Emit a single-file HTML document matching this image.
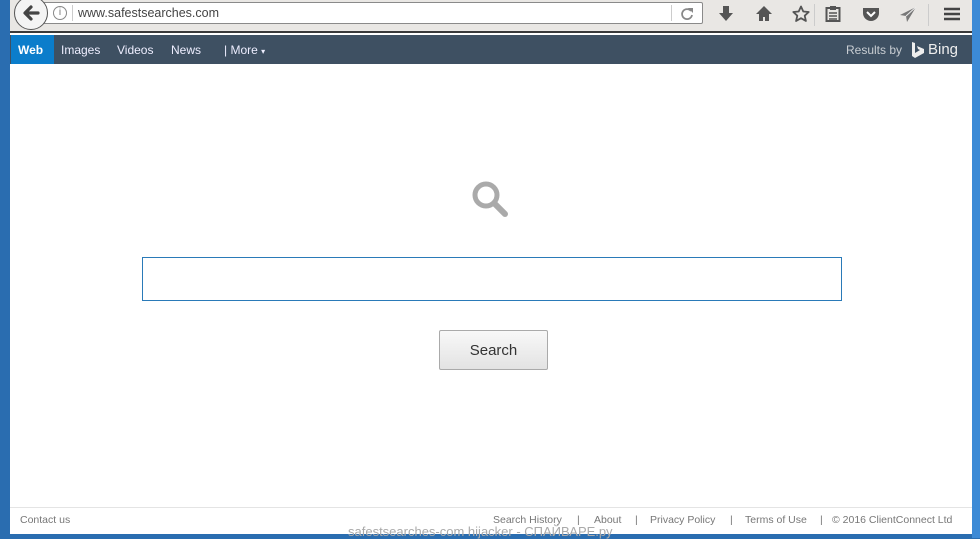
<!DOCTYPE html>
<html><head><meta charset="utf-8"><style>
*{margin:0;padding:0;box-sizing:border-box}
body{width:980px;height:538px;overflow:hidden;background:#2a6db0;font-family:"Liberation Sans",sans-serif;position:relative}
.win{position:absolute;left:10px;top:0;width:962px;height:534px;background:#fff}
.tb{position:absolute;left:0;top:0;width:962px;height:33px;background:#e9e7e4;border-bottom:2px solid #3a3a3a}
.url{position:absolute;left:32px;top:2px;width:661px;height:22px;background:#fff;border:1px solid #8a8a8a;border-radius:2px}
.back{position:absolute;left:4px;top:-4px;width:34px;height:34px;border-radius:50%;background:#f4f4f4;border:1px solid #555}
.nav{position:absolute;left:0;top:35px;width:962px;height:29px;background:#3e5062}
.nav span{position:absolute;top:8px;color:#eef;font-size:12px}
.foot{position:absolute;left:0;top:507px;width:962px;height:27px;border-top:1px solid #e4e4e4;font-size:10.5px;color:#777}
.foot span{position:absolute;top:6px}
.ic{position:absolute;top:5px}
</style></head><body>
<div style="position:absolute;left:972px;top:0;width:8px;height:538px;background:#3c8ad6"></div>
<div class="win">
<div class="tb">
<div class="url">
<div style="position:absolute;left:10px;top:3px;width:14px;height:14px;border:1px solid #888;border-radius:50%;font-size:10px;text-align:center;line-height:12px;color:#777">i</div>
<div style="position:absolute;left:29px;top:2px;width:1px;height:16px;background:#ccc"></div>
<div style="position:absolute;left:35px;top:3px;font-size:12.5px;color:#444">www.safestsearches.com</div>
<div style="position:absolute;left:628px;top:2px;width:1px;height:16px;background:#ccc"></div>
<svg style="position:absolute;left:637px;top:4px" width="14" height="14"><path d="M11 4A5 5 0 1 0 12 8" fill="none" stroke="#888" stroke-width="1.8"/><path d="M8 1h5v5z" fill="#888"/></svg>
</div>
<div class="back"><svg style="position:absolute;left:6px;top:6px" width="20" height="20"><path d="M17 10H5M10 4L4 10l6 6" fill="none" stroke="#444" stroke-width="3.2" stroke-linecap="round" stroke-linejoin="round"/></svg></div>
<svg class="ic" style="left:708px" width="16" height="18"><path d="M5 1h6v7h4l-7 8-7-8h4z" fill="#555"/></svg>
<svg class="ic" style="left:745px" width="18" height="18"><path d="M9 1L1 9h3v7h4v-4h2v4h4V9h3z" fill="#555"/></svg>
<svg class="ic" style="left:782px" width="18" height="18"><path d="M9 1.5l2.3 5 5.4.5-4 3.7 1.2 5.3L9 13.2 4.1 16l1.2-5.3-4-3.7 5.4-.5z" fill="none" stroke="#555" stroke-width="1.8" stroke-linejoin="round"/></svg>
<div style="position:absolute;left:804px;top:4px;width:1px;height:22px;background:#ccc"></div>
<svg class="ic" style="left:815px;top:6px" width="16" height="16"><rect x="1.5" y="2" width="13" height="13" fill="none" stroke="#555" stroke-width="2"/><rect x="5" y="0" width="6" height="4" fill="#555"/><path d="M4 7h8M4 10h8M4 13h8" stroke="#555" stroke-width="1.5"/></svg>
<svg class="ic" style="left:852px;top:6px" width="18" height="16"><path d="M1 2h16v5a8 8 0 0 1-16 0z" fill="#555"/><path d="M5 6l4 4 4-4" fill="none" stroke="#fff" stroke-width="2"/></svg>
<svg class="ic" style="left:889px;top:6px" width="18" height="16"><path d="M17 1L1 9l6 1 1 6z" fill="#777"/><path d="M17 1L7 10" stroke="#eee" stroke-width="1"/></svg>
<div style="position:absolute;left:918px;top:4px;width:1px;height:22px;background:#ccc"></div>
<svg class="ic" style="left:933px;top:6px" width="18" height="16"><path d="M1 3h16M1 8h16M1 13h16" stroke="#444" stroke-width="2.6"/></svg>
</div>
<div class="nav">
<div style="position:absolute;left:1px;top:0;width:43px;height:29px;background:#0b7dcb"></div>
<span style="left:8px;font-weight:bold;color:#fff">Web</span>
<span style="left:51px">Images</span>
<span style="left:107px">Videos</span>
<span style="left:161px">News</span>
<span style="left:214px">| More <small style="font-size:8px">▾</small></span>
<span style="left:836px;color:#c8cdd2">Results by</span>
<svg style="position:absolute;left:901px;top:7px" width="14" height="16"><path d="M1 0l3 1v10l5-3-2-1-1-3 7 3v4l-9 5-3-2z" fill="#eee"/></svg>
<span style="left:918px;font-size:15px;top:6px;color:#eee">Bing</span>
</div>
<svg style="position:absolute;left:461px;top:180px" width="40" height="40"><circle cx="15" cy="15" r="11" fill="none" stroke="#aaa" stroke-width="5"/><line x1="24" y1="24" x2="34" y2="34" stroke="#aaa" stroke-width="6" stroke-linecap="round"/></svg>
<div style="position:absolute;left:132px;top:257px;width:700px;height:44px;border:1px solid #2a7ab8"></div>
<div style="position:absolute;left:429px;top:330px;width:109px;height:40px;border:1px solid #aaa;border-radius:2px;background:linear-gradient(#f8f8f8,#e3e3e3);font-size:15px;color:#333;text-align:center;line-height:40px">Search</div>
<div class="foot">
<span style="left:10px">Contact us</span>
<span style="left:483px">Search History</span>
<span style="left:567px">|</span>
<span style="left:584px">About</span>
<span style="left:625px">|</span>
<span style="left:640px">Privacy Policy</span>
<span style="left:720px">|</span>
<span style="left:735px">Terms of Use</span>
<span style="left:810px">|</span>
<span style="left:822px">© 2016 ClientConnect Ltd</span>
<span style="left:338px;top:16px;font-size:13px;color:#aaa">safestsearches-com hijacker - СПАЙВАРЕ.ру</span>
</div>
</div>
</body></html>
